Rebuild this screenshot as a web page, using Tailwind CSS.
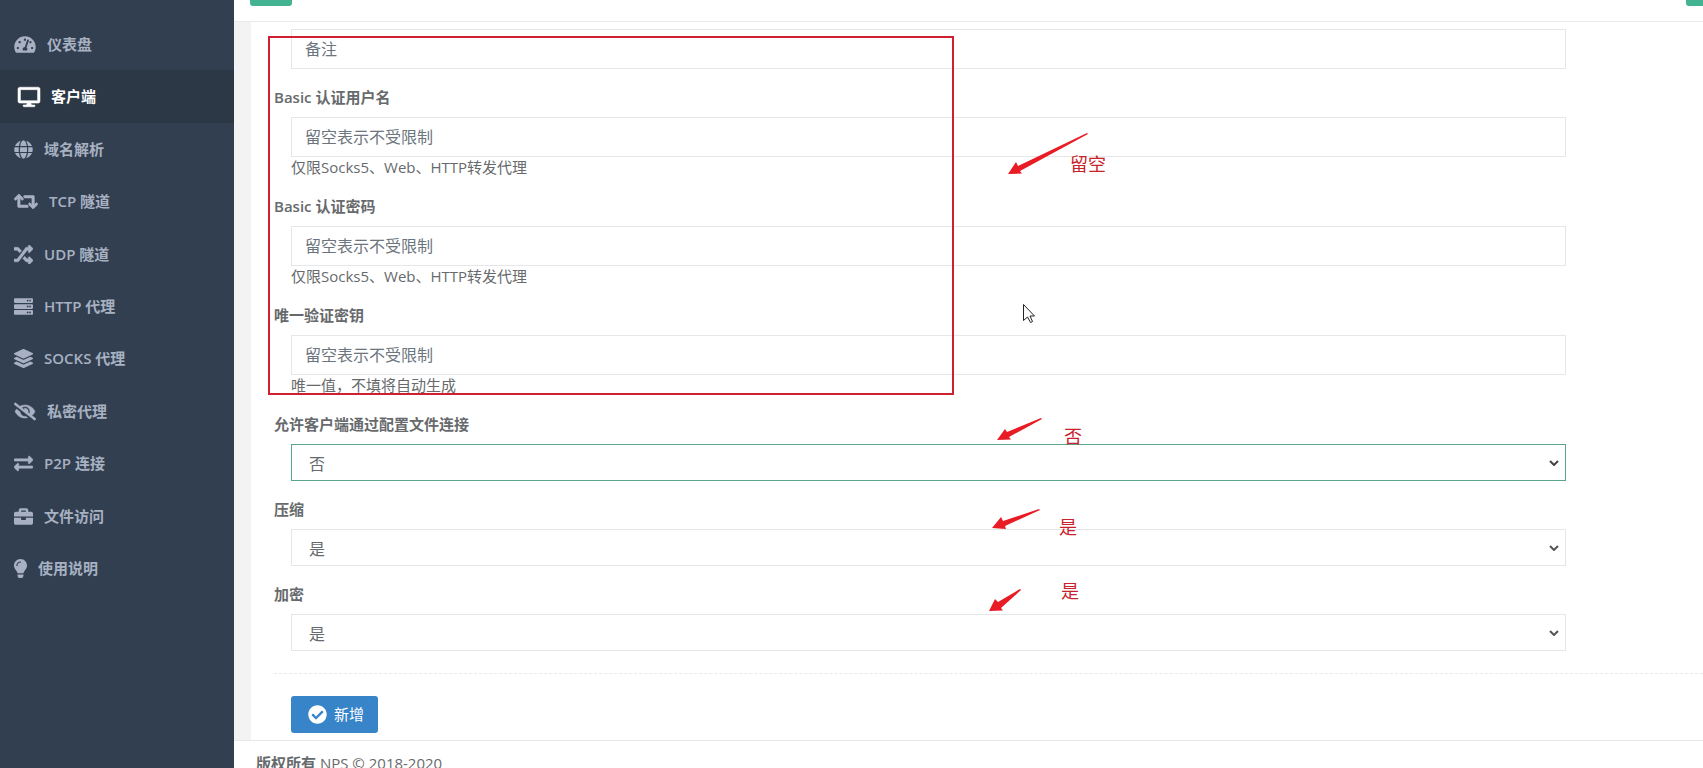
<!doctype html>
<html lang="zh-CN">
  <head>
    <meta charset="UTF-8" />
    <meta name="viewport" content="width=device-width, initial-scale=1.0" />
    <title>NPS - 新增客户端</title>
    <script src="https://cdn.jsdelivr.net/npm/@tailwindcss/browser@4"></script>
  </head>
  <body
    class="relative flex h-screen overflow-hidden bg-[#f3f3f4] font-['Open_Sans','Noto_Sans_CJK_SC',sans-serif] text-[15px] leading-[21px] text-[#676a6c]"
  >
    <!-- Sidebar -->
    <nav class="w-[234px] shrink-0 bg-[#323f50] pt-[18px]" aria-label="主菜单">
      <ul class="grid h-[577px] auto-rows-fr font-semibold text-[#a7b1c2]">
        <li class="grid">
          <a href="#" class="flex items-center gap-[11px] pl-[14px]">
            <svg class="h-[19px] w-[22px]" viewBox="0 0 576 512" fill="currentColor" aria-hidden="true">
              <path d="M288 32C128.900 32 0 160.900 0 320c0 52.800 14.200 102.300 39 144.800 5.600 9.600 16.300 15.200 27.400 15.200h443.200c11.100 0 21.800-5.600 27.400-15.200 24.800-42.500 39-92 39-144.800 0-159.100-128.900-288-288-288zm0 64c14.700 0 26.600 10.100 30.300 23.700-1.100 2.300-2.600 4.200-3.500 6.700l-9.200 27.700c-5.100 3.500-11 6-17.600 6-17.700 0-32-14.300-32-32S270.300 96 288 96zM96 384c-17.700 0-32-14.300-32-32s14.300-32 32-32 32 14.300 32 32-14.300 32-32 32zm48-160c-17.700 0-32-14.300-32-32s14.300-32 32-32 32 14.300 32 32-14.300 32-32 32zm246.800-72.400l-61.300 184C343.100 347.300 352 364.500 352 384c0 11.700-3.400 22.600-8.900 32H232.900c-5.500-9.500-8.900-20.300-8.900-32 0-33.900 26.500-61.400 59.900-63.600l61.300-184c4.200-12.600 17.700-19.500 30.400-15.200 12.600 4.200 19.400 17.800 15.200 30.400zm14.700 57.200l15.500-46.500c3.500-1.300 7.100-2.300 11.100-2.300 17.700 0 32 14.300 32 32s-14.300 32-32 32c-11.400 0-20.900-6.300-26.600-15.200zM480 384c-17.700 0-32-14.300-32-32s14.300-32 32-32 32 14.300 32 32-14.300 32-32 32z" />
            </svg>
            仪表盘
          </a>
        </li>
        <li class="grid bg-[#2d3846] text-white">
          <a href="#" class="flex items-center gap-[11px] pl-[18px]" aria-current="page">
            <svg class="h-5 w-[22px] overflow-visible" viewBox="0 0 576 512" fill="currentColor" aria-hidden="true">
              <path stroke="currentColor" stroke-width="14" d="M528 0H48C21.500 0 0 21.500 0 48v320c0 26.500 21.500 48 48 48h192l-16 48h-72c-13.300 0-24 10.700-24 24s10.700 24 24 24h272c13.300 0 24-10.700 24-24s-10.700-24-24-24h-72l-16-48h192c26.500 0 48-21.500 48-48V48c0-26.500-21.500-48-48-48zm-16 352H64V64h448v288z" />
            </svg>
            客户端
          </a>
        </li>
        <li class="grid">
          <a href="#" class="flex items-center gap-[11px] pl-[14px]">
            <svg class="h-[19px] w-[19px]" viewBox="0 0 496 512" fill="currentColor" aria-hidden="true">
              <path d="M336.500 160C322 70.700 287.800 8 248 8s-74 62.700-88.500 152h177zM152 256c0 22.200 1.200 43.500 3.300 64h185.300c2.100-20.500 3.300-41.800 3.300-64s-1.200-43.500-3.300-64H155.300c-2.100 20.500-3.300 41.800-3.300 64zm324.700-96c-28.600-67.900-86.500-120.400-158-141.600 24.400 33.800 41.200 84.700 50 141.600h108zM177.200 18.400C105.800 39.600 47.800 92.100 19.300 160h108c8.700-56.900 25.500-107.800 49.900-141.600zM487.400 192H372.700c2.100 21 3.300 42.500 3.300 64s-1.200 43-3.300 64h114.600c5.500-20.500 8.600-41.800 8.600-64s-3.100-43.500-8.500-64zM120 256c0-21.500 1.200-43 3.300-64H8.600C3.200 212.500 0 233.800 0 256s3.200 43.500 8.600 64h114.600c-2-21-3.200-42.500-3.200-64zm39.500 96c14.500 89.300 48.700 152 88.500 152s74-62.700 88.500-152h-177zm159.300 141.600c71.400-21.200 129.400-73.700 158-141.600h-108c-8.800 56.900-25.600 107.800-50 141.600zM19.300 352c28.600 67.900 86.500 120.400 158 141.600-24.400-33.800-41.200-84.700-50-141.600h-108z" />
            </svg>
            域名解析
          </a>
        </li>
        <li class="grid">
          <a href="#" class="flex items-center gap-[11px] pl-[14px]">
            <svg class="h-[19px] w-[24px]" viewBox="0 0 640 512" fill="currentColor" aria-hidden="true">
              <path stroke="currentColor" stroke-width="16" d="M629.700 343.600L529 444.300c-9.400 9.400-24.600 9.400-33.900 0L394.300 343.600c-9.400-9.400-9.400-24.600 0-33.900l10.800-10.800c9.600-9.600 25.100-9.300 34.400.5L480 342.100V160H292c-6.400 0-12.500-2.500-17-7l-16-16c-15.100-15.100-4.400-41 17-41h244c13.300 0 24 10.700 24 24v222.100l40.500-42.800c9.300-9.800 24.900-10.100 34.400-.5l10.800 10.800c9.400 9.400 9.400 24.600 0 34zM364.500 359c-4.500-4.500-10.600-7-17-7H160V169.900l40.500 42.800c9.300 9.800 24.900 10.100 34.400.5l10.800-10.800c9.400-9.400 9.400-24.600 0-33.900L145 67.700c-9.400-9.400-24.600-9.400-33.900 0L10.300 168.400c-9.400 9.400-9.400 24.600 0 33.900l10.800 10.800c9.600 9.600 25.100 9.300 34.400-.5L96 169.900V392c0 13.300 10.700 24 24 24h243.500c21.400 0 32.100-25.900 17-41l-16-16z" />
            </svg>
            TCP 隧道
          </a>
        </li>
        <li class="grid">
          <a href="#" class="flex items-center gap-[11px] pl-[14px]">
            <svg class="size-[19px]" viewBox="0 0 512 512" fill="currentColor" aria-hidden="true">
              <path stroke="currentColor" stroke-width="12" d="M505 400.100c9.400 9.400 9.400 24.600 0 33.900l-80 80c-15 15-41 4.500-41-17v-41h-54.800c-3.300 0-6.500-1.400-8.800-3.800l-84.200-90.200 53.300-57.100 61.700 66.100c2 2 4 1 5.800 1h27v-32c0-21.400 26-32 41-17l80 77zM12 144h72.800c1.500 0 3 .6 4 1.700l61.700 66.100 53.300-57.100-84.200-90.200c-2.300-2.400-5.500-3.800-8.800-3.800H12C5.400 60 0 65.400 0 72v60c0 6.600 5.400 12 12 12zm372 0v40c0 21.400 25.900 32 41 17l80-80c9.400-9.400 9.400-24.600 0-33.900l-80-80c-15-15-41-4.500-41 17v36h-54.800c-3.300 0-6.500 1.400-8.800 3.800L88.800 372.300c-1 1.100-2.500 1.700-4 1.700H12c-6.600 0-12 5.400-12 12v56c0 6.600 5.400 12 12 12h98.800c3.300 0 6.500-1.400 8.800-3.800L351.200 145.700c1-1.100 2.500-1.700 4-1.700H384z" />
            </svg>
            UDP 隧道
          </a>
        </li>
        <li class="grid">
          <a href="#" class="flex items-center gap-[11px] pl-[14px]">
            <svg class="size-[19px]" viewBox="0 0 512 512" fill="currentColor" aria-hidden="true">
              <path d="M480 160H32c-17.700 0-32-14.300-32-32V64c0-17.700 14.300-32 32-32h448c17.700 0 32 14.300 32 32v64c0 17.700-14.300 32-32 32zm-48-88a24 24 0 1 0 0 48 24 24 0 0 0 0-48zm-64 0a24 24 0 1 0 0 48 24 24 0 0 0 0-48zm112 248H32c-17.700 0-32-14.300-32-32v-64c0-17.700 14.300-32 32-32h448c17.700 0 32 14.300 32 32v64c0 17.700-14.300 32-32 32zm-48-88a24 24 0 1 0 0 48 24 24 0 0 0 0-48zm-64 0a24 24 0 1 0 0 48 24 24 0 0 0 0-48zm112 248H32c-17.700 0-32-14.300-32-32v-64c0-17.700 14.300-32 32-32h448c17.700 0 32 14.300 32 32v64c0 17.700-14.300 32-32 32zm-48-88a24 24 0 1 0 0 48 24 24 0 0 0 0-48zm-64 0a24 24 0 1 0 0 48 24 24 0 0 0 0-48z" />
            </svg>
            HTTP 代理
          </a>
        </li>
        <li class="grid">
          <a href="#" class="flex items-center gap-[11px] pl-[14px]">
            <svg class="size-[19px]" viewBox="0 0 512 512" fill="currentColor" aria-hidden="true">
              <path d="M12.400 148l232.900 105.700c6.800 3.100 14.500 3.100 21.300 0L499.600 148c16.600-7.500 16.600-32.500 0-40L266.700 2.300a25.600 25.600 0 0 0-21.300 0L12.400 107.900c-16.600 7.600-16.600 32.600 0 40.100zm487.200 88.300l-58.100-26.300-161.600 73.300c-7.600 3.400-15.600 5.200-23.900 5.200s-16.300-1.800-23.900-5.200L70.500 210l-58.100 26.300c-16.600 7.500-16.600 32.500 0 40l232.900 105.600c6.800 3.100 14.500 3.100 21.300 0l233-105.600c16.600-7.500 16.600-32.500 0-40zm0 127.800l-57.900-26.200-161.800 73.400c-7.600 3.400-15.600 5.200-23.900 5.200s-16.300-1.800-23.900-5.200L70.300 337.900l-57.900 26.200c-16.600 7.500-16.600 32.500 0 40l232.900 105.600c6.800 3.100 14.500 3.100 21.300 0l233-105.600c16.600-7.500 16.600-32.500 0-40z" />
            </svg>
            SOCKS 代理
          </a>
        </li>
        <li class="grid">
          <a href="#" class="flex items-center gap-[11px] pl-[14px]">
            <svg class="h-[19px] w-[22px]" viewBox="0 0 640 512" fill="currentColor" aria-hidden="true">
              <path stroke="currentColor" stroke-width="12" d="M320 400c-75.900 0-137.300-58.700-142.900-133.100L72.200 185.800c-13.800 17.300-26.500 35.600-36.700 55.600a32.400 32.400 0 0 0 0 29.200C89.700 376.400 197.100 448 320 448c26.900 0 52.900-4 77.900-10.500L346 397.400a144.100 144.100 0 0 1-26 2.600zm313.800 58.100l-110.500-85.400a331.300 331.300 0 0 0 81.200-102.100 32.400 32.400 0 0 0 0-29.200C550.300 135.600 442.900 64 320 64a308.200 308.200 0 0 0-147.300 37.700L45.500 3.400A16 16 0 0 0 23 6.200L3.400 31.500A16 16 0 0 0 6.200 53.900l588.300 454.700a16 16 0 0 0 22.500-2.800l19.600-25.300a16 16 0 0 0-2.800-22.400zM450.200 316.700l-39.300-30.400A94.800 94.800 0 0 0 416 256a94.800 94.800 0 0 0-121.300-92.200A47.700 47.700 0 0 1 304 192a46.600 46.600 0 0 1-1.500 10l-73.600-56.900A142.300 142.300 0 0 1 320 112a143.900 143.900 0 0 1 144 144c0 21.600-5.300 41.800-13.800 60.700z" />
            </svg>
            私密代理
          </a>
        </li>
        <li class="grid">
          <a href="#" class="flex items-center gap-[11px] pl-[14px]">
            <svg class="size-[19px]" viewBox="0 0 512 512" fill="currentColor" aria-hidden="true">
              <path stroke="currentColor" stroke-width="14" d="M0 168v-16c0-13.300 10.700-24 24-24h360V80c0-21.400 25.900-32 41-17l80 80c9.400 9.400 9.400 24.600 0 33.900l-80 80c-15 15-41 4.500-41-17v-48H24c-13.300 0-24-10.700-24-23.900zm488 152H128v-48c0-21.300-25.900-32.100-41-17L7 335c-9.400 9.400-9.400 24.600 0 33.900l80 80c15 15.100 41 4.500 41-17v-48h360c13.300 0 24-10.700 24-24v-16c0-13.200-10.700-23.900-24-23.900z" />
            </svg>
            P2P 连接
          </a>
        </li>
        <li class="grid">
          <a href="#" class="flex items-center gap-[11px] pl-[14px]">
            <svg class="size-[19px]" viewBox="0 0 512 512" fill="currentColor" aria-hidden="true">
              <path d="M320 336c0 8.800-7.200 16-16 16h-96c-8.800 0-16-7.200-16-16v-48H0v144c0 25.600 22.400 48 48 48h416c25.600 0 48-22.400 48-48V288H320v48zm144-208h-80V80c0-25.600-22.400-48-48-48H176c-25.600 0-48 22.400-48 48v48H48c-25.600 0-48 22.400-48 48v80h512v-80c0-25.600-22.400-48-48-48zm-144 0H192V96h128v32z" />
            </svg>
            文件访问
          </a>
        </li>
        <li class="grid">
          <a href="#" class="flex items-center gap-[11px] pl-[14px]">
            <svg class="h-[19px] w-[13px]" viewBox="0 0 352 512" fill="currentColor" aria-hidden="true">
              <path d="M96.100 454.400c0 6.300 1.900 12.500 5.400 17.700l17.100 25.700a32 32 0 0 0 26.600 14.300h61.700a32 32 0 0 0 26.600-14.300l17.100-25.700a32 32 0 0 0 5.400-17.700V416H96v38.400zM0 176c0 44.400 16.500 84.900 43.600 115.800 16.500 18.900 42.400 58.200 52.200 91.500v.7h160.200v-.7c9.900-33.300 35.700-72.600 52.200-91.500C335.600 260.900 352 220.400 352 176 352 78.600 272.900-.3 175.500 0 73.400.3 0 83 0 176zm176-80c-44.100 0-80 35.900-80 80 0 8.800-7.200 16-16 16s-16-7.200-16-16c0-61.800 50.200-112 112-112 8.800 0 16 7.200 16 16s-7.200 16-16 16z" />
            </svg>
            使用说明
          </a>
        </li>
      </ul>
    </nav>

    <div class="flex min-w-0 flex-1 flex-col">
      <!-- Top bar, its buttons scrolled mostly out of view -->
      <header
        class="flex h-[22px] shrink-0 items-end justify-between overflow-hidden border-b border-[#e7eaec] bg-white pb-[15px] pl-4"
      >
        <button class="h-[34px] w-[42px] shrink-0 rounded-[3px] bg-[#44b392]" aria-label="折叠菜单"></button>
        <button class="-mr-4 h-[34px] w-[33px] shrink-0 rounded-[3px] bg-[#44b392]" aria-label="语言"></button>
      </header>

      <!-- Client form -->
      <main class="ml-[17px] bg-white pt-[7px] pb-[7px] pl-[23px]">
        <form>
          <div class="flex flex-col gap-[18px]">
            <div class="pr-[137px] pl-[17px]">
              <input
                type="text"
                placeholder="备注"
                aria-label="备注"
                class="block h-10 w-full border border-[#e5e6e7] px-[13px] text-base placeholder:text-[#6c757d]"
              />
            </div>
            <div>
              <label for="basic-user" class="block font-semibold">Basic 认证用户名</label>
              <div class="mt-[9px] pr-[137px] pl-[17px]">
                <input
                  type="text"
                  id="basic-user"
                  placeholder="留空表示不受限制"
                  class="block h-10 w-full border border-[#e5e6e7] px-[13px] text-base placeholder:text-[#6c757d]"
                />
                <p>仅限Socks5、Web、HTTP转发代理</p>
              </div>
            </div>
            <div>
              <label for="basic-password" class="block font-semibold">Basic 认证密码</label>
              <div class="mt-[9px] pr-[137px] pl-[17px]">
                <input
                  type="text"
                  id="basic-password"
                  placeholder="留空表示不受限制"
                  class="block h-10 w-full border border-[#e5e6e7] px-[13px] text-base placeholder:text-[#6c757d]"
                />
                <p>仅限Socks5、Web、HTTP转发代理</p>
              </div>
            </div>
            <div>
              <label for="verify-key" class="block font-semibold">唯一验证密钥</label>
              <div class="mt-[9px] pr-[137px] pl-[17px]">
                <input
                  type="text"
                  id="verify-key"
                  placeholder="留空表示不受限制"
                  class="block h-10 w-full border border-[#e5e6e7] px-[13px] text-base placeholder:text-[#6c757d]"
                />
                <p>唯一值，不填将自动生成</p>
              </div>
            </div>
            <div>
              <label for="config-allow" class="block font-semibold">允许客户端通过配置文件连接</label>
              <div class="mt-[9px] mr-[137px] ml-[17px] grid items-center">
                <select
                  id="config-allow"
                  class="col-start-1 row-start-1 h-[37px] w-full appearance-none border border-[#5aa68c] bg-white px-[17px] pt-[2px] text-base"
                >
                  <option>是</option>
                  <option selected>否</option>
                </select>
                <svg class="pointer-events-none col-start-1 row-start-1 mr-[7px] h-[6px] w-[10px] justify-self-end" viewBox="0 0 10 6" fill="none" stroke="#444" stroke-width="2" aria-hidden="true">
                  <path d="M1 1l4 4 4-4" />
                </svg>
              </div>
            </div>
            <div>
              <label for="compress" class="block font-semibold">压缩</label>
              <div class="mt-[9px] mr-[137px] ml-[17px] grid items-center">
                <select
                  id="compress"
                  class="col-start-1 row-start-1 h-[37px] w-full appearance-none border border-[#e5e6e7] bg-white px-[17px] pt-[2px] text-base"
                >
                  <option selected>是</option>
                  <option>否</option>
                </select>
                <svg class="pointer-events-none col-start-1 row-start-1 mr-[7px] h-[6px] w-[10px] justify-self-end" viewBox="0 0 10 6" fill="none" stroke="#555" stroke-width="2" aria-hidden="true">
                  <path d="M1 1l4 4 4-4" />
                </svg>
              </div>
            </div>
            <div>
              <label for="crypt" class="block font-semibold">加密</label>
              <div class="mt-[9px] mr-[137px] ml-[17px] grid items-center">
                <select
                  id="crypt"
                  class="col-start-1 row-start-1 h-[37px] w-full appearance-none border border-[#e5e6e7] bg-white px-[17px] pt-[2px] text-base"
                >
                  <option selected>是</option>
                  <option>否</option>
                </select>
                <svg class="pointer-events-none col-start-1 row-start-1 mr-[7px] h-[6px] w-[10px] justify-self-end" viewBox="0 0 10 6" fill="none" stroke="#555" stroke-width="2" aria-hidden="true">
                  <path d="M1 1l4 4 4-4" />
                </svg>
              </div>
            </div>
          </div>
          <hr class="my-[22px] border-dashed border-[#e7eaec]" />
          <button
            type="button"
            class="ml-[17px] flex h-[37px] items-center gap-[7px] rounded-[3px] bg-[#3784c9] px-[14px] pl-[17px] text-white"
          >
            <svg class="size-[19px]" viewBox="0 0 512 512" fill="currentColor" aria-hidden="true">
              <path d="M504 256c0 137-111 248-248 248S8 393 8 256 119 8 256 8s248 111 248 248zM227.300 387.300l184-184c6.200-6.200 6.200-16.400 0-22.600l-22.600-22.600c-6.200-6.200-16.400-6.200-22.600 0L216 308.100l-70.100-70.100c-6.200-6.200-16.400-6.200-22.600 0l-22.600 22.600c-6.200 6.200-6.200 16.400 0 22.600l104 104c6.200 6.300 16.400 6.300 22.600.1z" />
            </svg>
            新增
          </button>
        </form>
      </main>

      <footer class="flex-1 shrink-0 border-t border-[#e7eaec] bg-white pt-[12px] pl-[22px]">
        <p class="whitespace-nowrap"><strong class="font-semibold">版权所有</strong> NPS © 2018-2020</p>
      </footer>
    </div>

    <!-- Hints drawn over the form -->
    <svg class="pointer-events-none absolute inset-0 size-full text-lg" aria-label="填写提示">
      <rect x="269" y="37" width="684" height="357" fill="none" stroke="#d01f30" stroke-width="2" />
      <g fill="#e81c24">
        <path d="M1087 133L1088 134L1020 171L1022 173.500L1008 174L1016 162L1018 166Z" />
        <path d="M1041 418L1042 419L1009 437L1011 439.500L997 440L1005 429L1007 432Z" />
        <path d="M1039 509L1040 510L1005 526L1006 529L992 528L1001 517L1003 521Z" />
        <path d="M1020 589L1021 590L1001 608L1003 610.500L989 611L995 599L998 602Z" />
      </g>
      <g fill="#c8232c">
        <text x="1070" y="171">留空</text>
        <text x="1064" y="443">否</text>
        <text x="1059" y="534">是</text>
        <text x="1061" y="598">是</text>
      </g>
      <path d="M1023.500 304.500V320.500L1027.500 317L1030.500 322.500L1032.500 321.500L1030 316H1034.500Z" fill="#fff" stroke="#222" />
    </svg>
  </body>
</html>
